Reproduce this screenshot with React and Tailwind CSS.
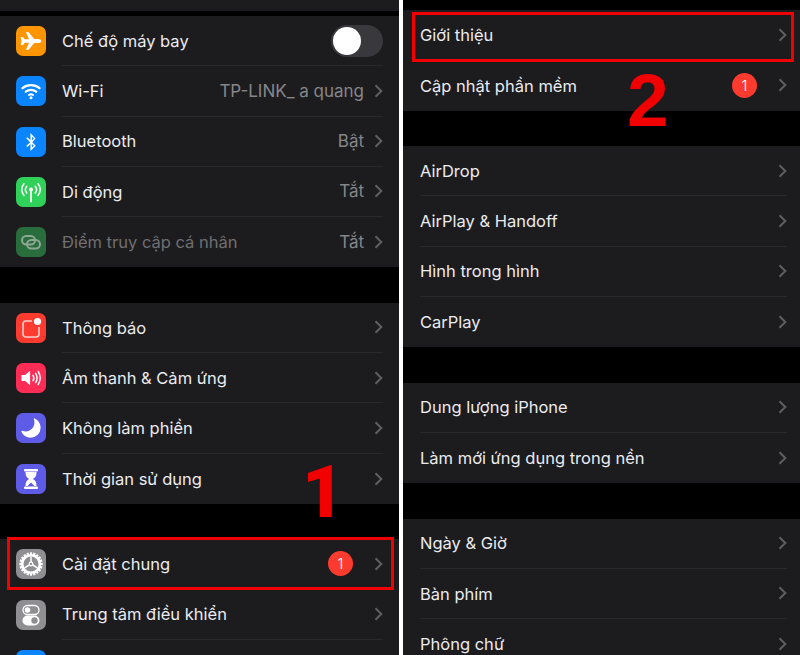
import React from 'react'
import { IoAirplane, IoMoon } from 'react-icons/io5'
import { FaBluetoothB } from 'react-icons/fa'

const Wifi = () => (
  <svg viewBox="0 0 30 30" className="w-[30px] h-[30px]" fill="none" stroke="white" strokeWidth="2.300" strokeLinecap="round">
    <path d="M6.500 12.200c4.800-4 12.200-4 17 0" />
    <path d="M9.800 15.700c3-2.500 7.400-2.500 10.400 0" />
    <path d="M12.900 19c1.200-.9 3-.9 4.200 0" strokeWidth="2" />
    <circle cx="15" cy="21.800" r="1.500" fill="white" stroke="none" />
  </svg>
)

const Antenna = () => (
  <svg viewBox="0 0 30 30" className="w-[30px] h-[30px]" fill="none" stroke="white" strokeWidth="1.500" strokeLinecap="round">
    <circle cx="15" cy="12.500" r="2" fill="white" stroke="none" />
    <path d="M15 13v11.500" strokeWidth="1.800" />
    <path d="M10.800 9.200c-1.700 2-1.700 4.800 0 6.800M19.200 9.200c1.700 2 1.700 4.800 0 6.800" />
    <path d="M8 6.800c-3 3.400-3 8.200 0 11.600M22 6.800c3 3.400 3 8.200 0 11.600" />
  </svg>
)

const Hotspot = () => (
  <svg viewBox="0 0 30 30" className="w-[30px] h-[30px]" fill="none" stroke="#8fa896" strokeWidth="2">
    <rect x="6" y="9" width="13" height="8.500" rx="4.250" />
    <rect x="11" y="13" width="13" height="8.500" rx="4.250" />
  </svg>
)

const Notif = () => (
  <svg viewBox="0 0 30 30" className="w-[30px] h-[30px]" fill="none">
    <path d="M16 8H10a3 3 0 0 0-3 3v10a3 3 0 0 0 3 3h10a3 3 0 0 0 3-3v-7" stroke="#ffd0cc" strokeWidth="1.600" />
    <circle cx="21.500" cy="8.500" r="3.600" fill="white" />
  </svg>
)

const Sound = () => (
  <svg viewBox="0 0 30 30" className="w-[30px] h-[30px]" fill="none" stroke="white" strokeWidth="1.500" strokeLinecap="round">
    <path d="M5.500 12h3.600l5-4.300v14.600l-5-4.300H5.500z" fill="white" stroke="none" />
    <path d="M17 12.300c1 1.600 1 3.800 0 5.400" />
    <path d="M19.600 10.300c1.800 2.900 1.800 6.500 0 9.400" />
    <path d="M22.200 8.500c2.500 4 2.500 9 0 13" />
  </svg>
)

const Hourglass = () => (
  <svg viewBox="0 0 30 30" className="w-[30px] h-[30px]" fill="white">
    <rect x="8" y="5" width="14" height="2.600" rx="1" />
    <rect x="8" y="22.400" width="14" height="2.600" rx="1" />
    <path d="M9.500 8h11c0 3.600-.8 5.400-3.600 7 2.800 1.600 3.600 3.400 3.600 7h-2l-3.500-3.500L11.500 22h-2c0-3.600.8-5.400 3.600-7-2.800-1.600-3.600-3.400-3.600-7z" />
  </svg>
)

const Gear = () => {
  const teeth = Array.from({ length: 20 }, (_, i) => i * 18)
  return (
    <svg viewBox="0 0 30 30" className="w-[30px] h-[30px]" fill="none" stroke="white">
      {teeth.map((a) => (
        <rect key={a} x="13.900" y="3.300" width="2.200" height="3.200" fill="white" stroke="none" transform={`rotate(${a} 15 15)`} />
      ))}
      <circle cx="15" cy="15" r="8.800" strokeWidth="2.600" />
      <circle cx="15" cy="15" r="1.800" strokeWidth="1.300" />
      <path d="M15 13V7.500M13.300 16 8.500 18.800M16.700 16l4.800 2.800" strokeWidth="1.500" />
    </svg>
  )
}

const Switches = () => (
  <svg viewBox="0 0 30 30" className="w-[30px] h-[30px]" fill="none">
    <rect x="7" y="5.500" width="16" height="9" rx="4.500" stroke="white" strokeWidth="1.300" />
    <circle cx="11.500" cy="10" r="2.800" fill="white" />
    <rect x="6.500" y="15.500" width="17" height="10" rx="5" fill="white" />
    <circle cx="18.500" cy="20.500" r="3.200" fill="#8e8e93" />
  </svg>
)

const IconBox = ({ color, children }) => (
  <div className={`w-[30px] h-[30px] shrink-0 rounded-[7px] flex items-center justify-center ${color}`}>
    {children}
  </div>
)

const Chevron = () => (
  <svg viewBox="0 0 9 14" className="w-[9px] h-[14px] shrink-0" fill="none" stroke="#5f5f63" strokeWidth="2">
    <path d="M1.500 1.200 7.300 7l-5.800 5.800" />
  </svg>
)

const Badge = () => (
  <div className="w-[25px] h-[25px] rounded-full bg-[#ff3b30] flex items-center justify-center text-white text-[15px] font-light leading-none">1</div>
)

const Toggle = () => (
  <div className="w-[52px] h-[32px] rounded-full bg-[#39393d] flex items-center pl-[2px]">
    <div className="w-[28px] h-[28px] rounded-full bg-white" />
  </div>
)

const Row = ({ icon, label, value, badge, toggle, dim, last, pr }) => (
  <div className={`h-[50.25px] flex items-center ${icon ? 'pl-4' : 'pl-[17px]'} ${pr}`}>
    {icon}
    <div className={`flex-1 h-full flex items-center min-w-0 ${icon ? 'ml-4' : ''} ${last ? '' : 'border-b border-[#2a2a2c]'}`}>
      <span className={`flex-1 pt-px text-[16.5px] whitespace-nowrap ${dim ? 'text-[#6f6f72]' : 'text-[#ebebf0]'}`}>{label}</span>
      {value && <span className="pt-px text-[17px] text-[#86868a] mr-[10px] whitespace-nowrap">{value}</span>}
      {badge && <div className="mr-[21px]"><Badge /></div>}
      {toggle ? <Toggle /> : <Chevron />}
    </div>
  </div>
)

const Group = ({ rows, pr }) => (
  <div className="bg-[#1c1c1e] shrink-0">
    {rows.map((r, i) => (
      <Row key={i} {...r} pr={pr} last={i === rows.length - 1} />
    ))}
  </div>
)

const leftGroups = [
  [
    { label: 'Chế độ máy bay', toggle: true, icon: <IconBox color="bg-[#ff9500]"><IoAirplane size={22} color="white" /></IconBox> },
    { label: 'Wi-Fi', value: 'TP-LINK_ a quang', icon: <IconBox color="bg-[#0a84ff]"><Wifi /></IconBox> },
    { label: 'Bluetooth', value: 'Bật', icon: <IconBox color="bg-[#0a84ff]"><FaBluetoothB size={18} color="white" /></IconBox> },
    { label: 'Di động', value: 'Tắt', icon: <IconBox color="bg-[#30d158]"><Antenna /></IconBox> },
    { label: 'Điểm truy cập cá nhân', value: 'Tắt', dim: true, icon: <IconBox color="bg-[#2a6d3c]"><Hotspot /></IconBox> },
  ],
  [
    { label: 'Thông báo', icon: <IconBox color="bg-[#ff3b30]"><Notif /></IconBox> },
    { label: 'Âm thanh & Cảm ứng', icon: <IconBox color="bg-[#ff2d55]"><Sound /></IconBox> },
    { label: 'Không làm phiền', icon: <IconBox color="bg-[#5e5ce6]"><IoMoon size={22} color="white" className="-scale-x-100" /></IconBox> },
    { label: 'Thời gian sử dụng', icon: <IconBox color="bg-[#5e5ce6]"><Hourglass /></IconBox> },
  ],
  [
    { label: 'Cài đặt chung', badge: true, icon: <IconBox color="bg-[#8e8e93]"><Gear /></IconBox> },
    { label: 'Trung tâm điều khiển', icon: <IconBox color="bg-[#8e8e93]"><Switches /></IconBox> },
    { label: '', icon: <IconBox color="bg-[#0a84ff]" /> },
  ],
]

const rightGroups = [
  [{ label: 'Giới thiệu' }, { label: 'Cập nhật phần mềm', badge: true }],
  [{ label: 'AirDrop' }, { label: 'AirPlay & Handoff' }, { label: 'Hình trong hình' }, { label: 'CarPlay' }],
  [{ label: 'Dung lượng iPhone' }, { label: 'Làm mới ứng dụng trong nền' }],
  [{ label: 'Ngày & Giờ' }, { label: 'Bàn phím' }, { label: 'Phông chữ' }],
]

export default function App() {
  return (
    <div className="relative w-[800px] h-[655px] overflow-hidden bg-white flex font-['Inter','Noto_Sans',sans-serif]">
      {/* left screen */}
      <div className="w-[399px] h-full bg-black shrink-0 flex flex-col gap-[35.5px] overflow-hidden">
        <div className="flex flex-col gap-[5px] shrink-0">
          <div className="h-[11px] bg-[#1c1c1e]" />
          <Group rows={leftGroups[0]} pr="pr-4" />
        </div>
        <Group rows={leftGroups[1]} pr="pr-4" />
        <Group rows={leftGroups[2]} pr="pr-4" />
      </div>

      {/* right screen */}
      <div className="w-[397px] h-full ml-[4px] bg-black shrink-0 flex flex-col gap-[35.5px] pt-[10px] overflow-hidden">
        {rightGroups.map((rows, i) => (
          <Group key={i} rows={rows} pr="pr-[13px]" />
        ))}
      </div>

      {/* annotations */}
      <div className="absolute left-[7px] top-[537px] w-[387px] h-[53px] border-[3px] border-[#f00000]" />
      <div className="absolute left-[412px] top-[12px] w-[382px] h-[50px] border-[3px] border-[#f00000]" />
      <div className="absolute left-[302px] top-[447px] text-[#f00000] text-[73px] leading-[90px] font-black font-['Roboto',sans-serif]">1</div>
      <div className="absolute left-[627px] top-[55px] text-[#f00000] text-[75px] leading-[90px] font-bold font-['Liberation_Sans',sans-serif]">2</div>
    </div>
  )
}
